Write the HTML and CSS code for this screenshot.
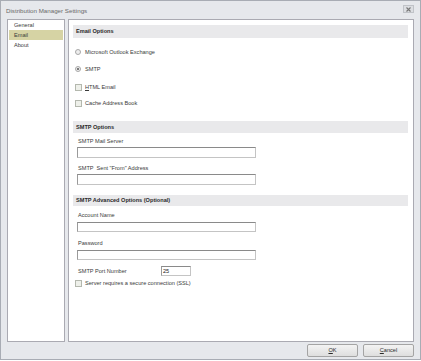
FILE: index.html
```html
<!DOCTYPE html>
<html>
<head>
<meta charset="utf-8">
<link rel="stylesheet" href="styles.css">
</head>
<body>
<div class="window">
  <div class="titlebar">
    <span class="title">Distribution Manager Settings</span>
    <span class="close"><svg width="9" height="7" viewBox="0 0 9 7"><path d="M2.5 1.5 L6.5 5.5 M6.5 1.5 L2.5 5.5" stroke="#777" stroke-width="1.1"/></svg></span>
  </div>
  <div class="content">
    <div class="nav">
      <div class="nav-item">General</div>
      <div class="nav-item selected">Email</div>
      <div class="nav-item">About</div>
    </div>
    <div class="main">
      <div class="section-head first">Email Options</div>
      <div class="opt r1"><span class="radio"></span>Microsoft Outlook Exchange</div>
      <div class="opt r2"><span class="radio on"></span>SMTP</div>
      <div class="opt r3"><span class="check"></span><u>H</u>TML Email</div>
      <div class="opt r4"><span class="check"></span>Cache Address Book</div>

      <div class="section-head s2">SMTP Options</div>
      <div class="label l1">SMTP Mail Server</div>
      <div class="field"></div>
      <div class="label l2">SMTP &nbsp;Sent "From" Address</div>
      <div class="field"></div>

      <div class="section-head s3">SMTP Advanced Options (Optional)</div>
      <div class="label l3">Account Name</div>
      <div class="field f3"></div>
      <div class="label l4">Password</div>
      <div class="field f4"></div>
      <div class="port-row">
        <span class="port-label">SMTP Port Number</span>
        <span class="port-field">25</span>
      </div>
      <div class="opt ssl"><span class="check"></span>Server requires a secure connection (SSL)</div>
    </div>
  </div>
  <div class="footer">
    <div class="btn"><u>O</u>K</div>
    <div class="btn"><u>C</u>ancel</div>
  </div>
</div>
</body>
</html>
```
FILE: styles.css
```css
* { box-sizing: border-box; }
html, body { margin: 0; padding: 0; background: #fff; }
body { width: 421px; height: 361px; font-family: "Liberation Sans", Arial, sans-serif; color: #3a3a3a; }
.window {
  width: 421px; height: 360px;
  background: #e6e8ec;
  border: 1px solid #a8acb4;
  display: flex; flex-direction: column;
}
.titlebar {
  height: 18px; display: flex; align-items: center; justify-content: space-between;
  padding: 0 6px 0 5px;
}
.title { font-size: 6.2px; color: #6a6a6a; margin-top: 1px; }
.close {
  width: 11px; height: 8px; border: 1px solid #c0c3c8; background: #dcdee2;
  display: flex; align-items: center; justify-content: center; margin-top: -2px;
}
.content { display: flex; gap: 3px; padding-left: 6px; height: 323px; }
.nav {
  width: 58px; background: #fff; border: 1px solid #aaaab2;
}
.nav-item { height: 10px; font-size: 5.6px; line-height: 10px; padding-left: 6px; color: #3a3a3a; }
.nav-item.selected { background: #d6d3a4; margin: 0 1px; padding-left: 5px; }
.main {
  width: 346px; background: #fff; border: 1px solid #aaaab2;
  padding: 5px 5px 0 4px;
  font-size: 5.6px;
}
.section-head {
  height: 13px; background: #e9e9eb; font-weight: bold; color: #2a2a2a;
  line-height: 13px; padding-left: 3px;
}
.section-head.s2 { margin-top: 14px; height: 12px; line-height: 12px; }
.section-head.s3 { margin-top: 10px; height: 11px; line-height: 11px; }
.opt { display: flex; align-items: center; height: 8px; padding-left: 2px; color: #3a3a3a; }
.opt.r1 { margin-top: 10px; }
.opt.r2 { margin-top: 9px; }
.opt.r3 { margin-top: 10px; }
.opt.r4 { margin-top: 8px; }
.radio {
  width: 6px; height: 6px; border-radius: 50%; border: 1px solid #a8a8a8; background: #eee;
  margin-right: 4px; position: relative; flex: none;
}
.radio.on::after {
  content: ""; position: absolute; left: 1px; top: 1px; width: 2px; height: 2px; border-radius: 50%; background: #555;
}
.check {
  width: 7px; height: 7px; border: 1px solid #b4b8ae; background: #eef0ea; margin-right: 3px; flex: none;
}
.label { height: 7px; line-height: 7px; padding-left: 5px; color: #3a3a3a; }
.label.l1 { margin-top: 5px; }
.label.l2 { margin-top: 7px; }
.label.l3 { margin-top: 6px; }
.label.l4 { margin-top: 8px; }
.field {
  width: 179px; height: 11px; margin-top: 2px; margin-left: 4px;
  border: 1px solid #c4c4c4; border-top-color: #8a8a8a; border-left-color: #9a9a9a; background: #fff;
}
.field.f3 { margin-top: 3px; height: 10px; }
.field.f4 { margin-top: 3px; height: 10px; }
.port-row { display: flex; align-items: center; height: 10px; margin-top: 6px; padding-left: 5px; }
.port-label { width: 83px; }
.port-field {
  width: 30px; height: 10px; border: 1px solid #c4c4c4; border-top-color: #8a8a8a; border-left-color: #9a9a9a; line-height: 8px; padding-left: 1px; color: #222;
}
.opt.ssl { margin-top: 3px; }
.footer { display: flex; justify-content: flex-end; gap: 5px; padding: 2px 6px 0 0; }
.btn {
  width: 51px; height: 13px; border: 1px solid #a4a4a4; border-radius: 2px;
  background: linear-gradient(#f3f3f3, #dedede);
  font-size: 5.6px; text-align: center; line-height: 11px; color: #2a2a2a;
}
```
